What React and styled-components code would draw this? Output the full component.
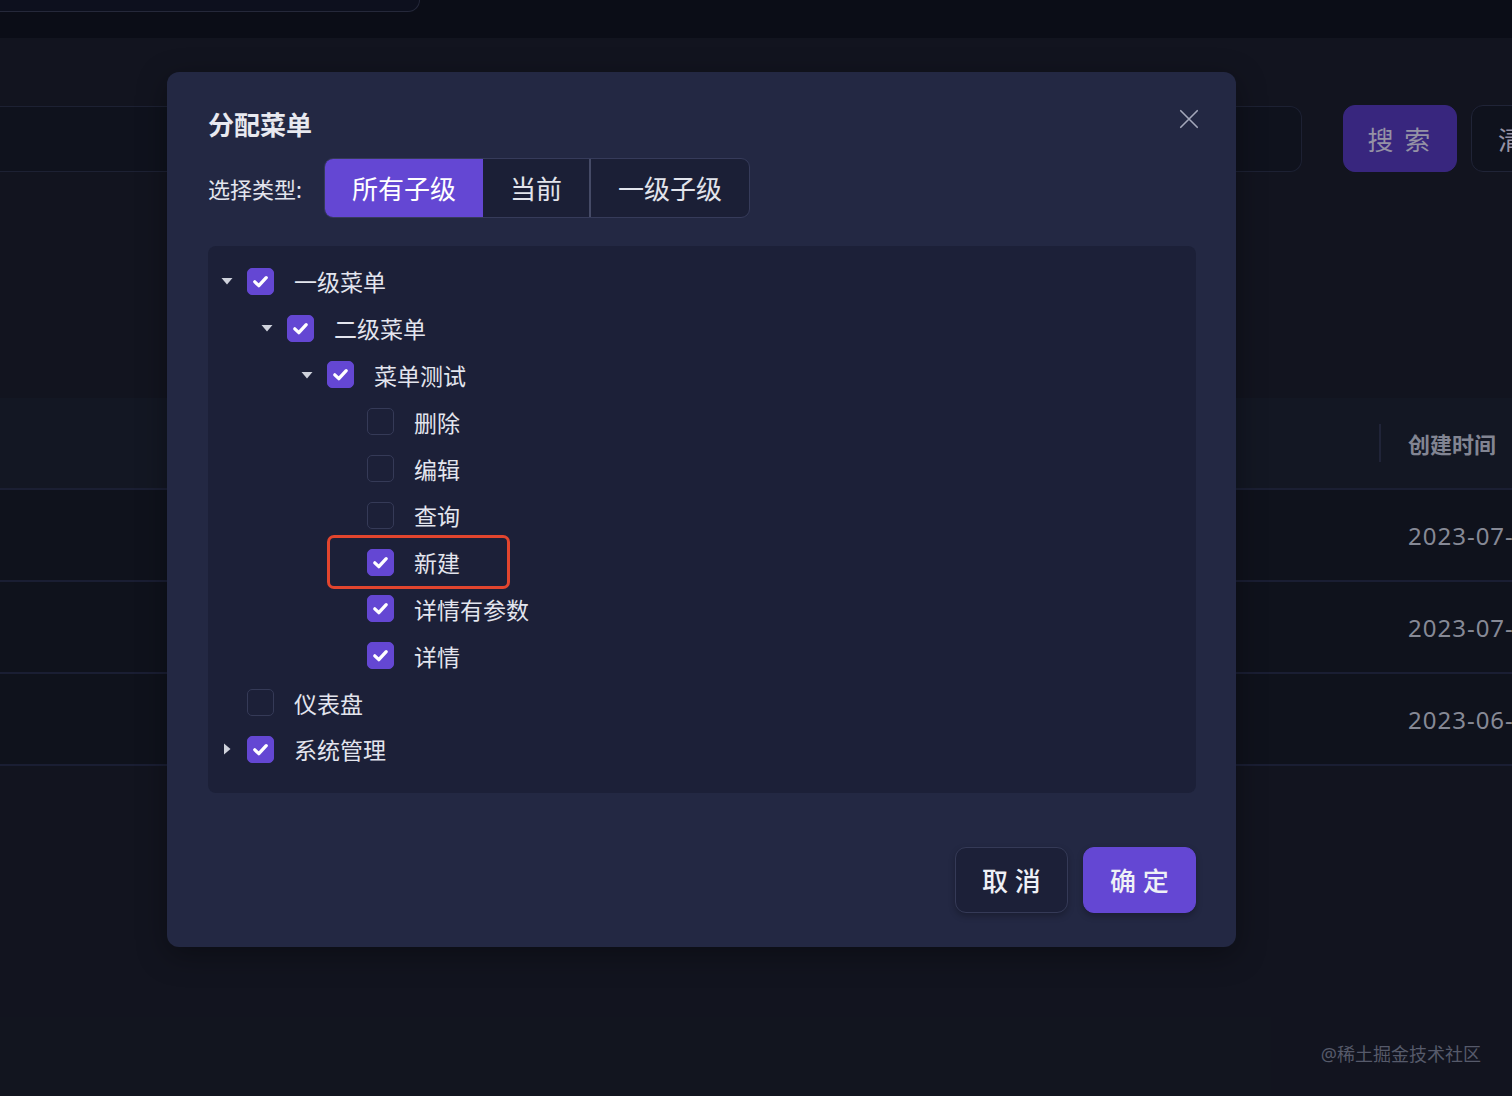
import React from 'react'
import styled, { createGlobalStyle } from 'styled-components'

const GlobalStyle = createGlobalStyle`
  html, body {
    margin: 0;
    padding: 0;
    background: #131621;
    overflow: hidden;
  }
  body {
    font-family: "Noto Sans", "Noto Sans CJK SC", sans-serif;
    color: #e6e8f0;
  }
  * { box-sizing: border-box; }
`

const Page = styled.div`
  width: 1512px;
  height: 1096px;
  display: flex;
  flex-direction: column;
  background: #131621;
  position: relative;
  overflow: hidden;
`

const TopBar = styled.div`
  height: 38px;
  flex-shrink: 0;
  display: flex;
  align-items: flex-end;
  padding-bottom: 26px;
  background: #0c0e19;
  overflow: hidden;
`

const TopInput = styled.div`
  width: 420px;
  height: 48px;
  flex-shrink: 0;
  border: 1px solid #272b3e;
  border-left: none;
  border-radius: 0 12px 12px 0;
  background: #0e1120;
`

const Content = styled.div`
  flex: 1;
  display: flex;
  flex-direction: column;
  padding-top: 67px;
`

const SearchRow = styled.div`
  display: flex;
  align-items: center;
  height: 67px;
`

const SearchInput = styled.div`
  width: 1302px;
  flex-shrink: 0;
  height: 66px;
  border: 1px solid #1f2336;
  border-left: none;
  border-radius: 0 12px 12px 0;
  background: #10131f;
`

const FormButton = styled.div`
  height: 67px;
  margin-left: ${p => p.$gap}px;
  width: ${p => p.$w}px;
  flex-shrink: 0;
  display: flex;
  align-items: center;
  justify-content: ${p => (p.$primary ? 'center' : 'flex-start')};
  padding-left: ${p => (p.$primary ? 0 : 26)}px;
  border-radius: 12px;
  font-size: 26px;
  letter-spacing: 2px;
  color: #9d9aae;
  background: ${p => (p.$primary ? '#3b2985' : '#10131f')};
  border: 1px solid ${p => (p.$primary ? '#3b2985' : '#22263a')};
  white-space: nowrap;
  overflow: hidden;
`

const Table = styled.div`
  margin-top: 226px;
  display: flex;
  flex-direction: column;
`

const HeadRow = styled.div`
  height: 92px;
  display: flex;
  align-items: center;
  background: #151925;
  border-bottom: 2px solid #1d2136;
`

const BodyRow = styled.div`
  height: 92px;
  display: flex;
  align-items: center;
  background: #10131e;
  border-bottom: 2px solid #1c2036;
`

const Cell = styled.div`
  margin-left: 1379px;
  height: 38px;
  display: flex;
  align-items: center;
  padding-left: 27px;
  border-left: 2px solid ${p => (p.$head ? '#22263c' : 'transparent')};
  font-size: ${p => (p.$head ? 22 : 24)}px;
  letter-spacing: ${p => (p.$head ? 0 : 1)}px;
  font-weight: ${p => (p.$head ? 700 : 400)};
  color: ${p => (p.$head ? '#8a8d9b' : '#8e919e')};
  white-space: nowrap;
`

const Watermark = styled.div`
  position: absolute;
  right: 31px;
  bottom: 30px;
  font-size: 18px;
  color: #5b5f70;
`

const Overlay = styled.div`
  position: absolute;
  inset: 0;
  background: rgba(0, 0, 0, 0.05);
  display: flex;
  align-items: flex-start;
  justify-content: flex-start;
  padding: 72px 0 0 167px;
`

const Modal = styled.div`
  width: 1069px;
  height: 875px;
  background: #232843;
  border-radius: 12px;
  padding: 36px 40px 34px 41px;
  display: flex;
  flex-direction: column;
  position: relative;
  box-shadow: 0 8px 30px rgba(0, 0, 0, 0.35);
`

const Title = styled.h3`
  margin: 0;
  height: 34px;
  line-height: 34px;
  font-size: 26px;
  font-weight: 700;
  color: #e8e9f0;
`

const CloseBtn = styled.button`
  position: absolute;
  top: 34px;
  right: 34px;
  width: 26px;
  height: 26px;
  padding: 0;
  border: none;
  background: none;
  display: flex;
  align-items: center;
  justify-content: center;
  svg { width: 22px; height: 22px; }
`

const TypeRow = styled.div`
  margin-top: 16px;
  display: flex;
  align-items: center;
  height: 60px;
`

const TypeLabel = styled.span`
  font-size: 22px;
  color: #e3e5ee;
  width: 116px;
  flex-shrink: 0;
`

const Segmented = styled.div`
  display: flex;
  height: 60px;
  border: 1px solid #363b5a;
  border-radius: 9px;
  overflow: hidden;
  background: #1b1f36;
`

const Segment = styled.div`
  display: flex;
  align-items: center;
  padding: 0 27px;
  font-size: 26px;
  color: ${p => (p.$active ? '#ffffff' : '#e2e4ec')};
  background: ${p => (p.$active ? '#6447d3' : 'transparent')};
  border-left: ${p => (p.$divider ? '2px solid #454a66' : 'none')};
  white-space: nowrap;
`

const TreePanel = styled.div`
  margin-top: 28px;
  background: #1c2038;
  border-radius: 8px;
  padding: 12px 0 20px 0;
`

const Row = styled.div`
  height: 46.8px;
  display: flex;
  align-items: center;
  padding-left: ${p => 4 + p.$level * 40}px;
`

const CaretSlot = styled.span`
  width: 30px;
  margin-right: 5px;
  display: flex;
  align-items: center;
  justify-content: center;
  svg { width: 12px; height: 12px; }
`

const Box = styled.span`
  width: 27px;
  height: 27px;
  flex-shrink: 0;
  border-radius: 5px;
  display: flex;
  align-items: center;
  justify-content: center;
  background: ${p => (p.$checked ? '#6447d3' : 'transparent')};
  border: 1.5px solid ${p => (p.$checked ? '#6447d3' : '#353a57')};
  svg { width: 19px; height: 19px; }
`

const Label = styled.span`
  margin-left: 20px;
  font-size: 23px;
  color: #e3e5ee;
  white-space: nowrap;
`

const Highlight = styled.div`
  display: flex;
  align-items: center;
  height: 54px;
  margin-left: -40px;
  padding-left: 37px;
  width: 183px;
  border: 3px solid #e2452e;
  border-radius: 7px;
`

const Footer = styled.div`
  margin-top: auto;
  display: flex;
  justify-content: flex-end;
  gap: 15px;
`

const FooterButton = styled.button`
  width: 113px;
  height: 66px;
  border-radius: 11px;
  font-family: inherit;
  font-size: 26px;
  font-weight: 500;
  color: #eef0f6;
  cursor: pointer;
  background: ${p => (p.$primary ? '#6447d3' : '#1c2038')};
  border: 1.5px solid ${p => (p.$primary ? '#6447d3' : '#353a57')};
  box-shadow: 0 3px 6px rgba(0, 0, 0, 0.25);
`

const Caret = ({ open }) => (
  <svg viewBox="0 0 12 12">
    {open ? (
      <path d="M0.5 3 L11.5 3 L6 9.5 Z" fill="#cfd2dc" />
    ) : (
      <path d="M3 0.5 L9.5 6 L3 11.5 Z" fill="#cfd2dc" />
    )}
  </svg>
)

const Check = () => (
  <svg viewBox="0 0 16 16" fill="none">
    <path d="M3.2 8.3 L6.6 11.5 L12.8 4.8" stroke="#fff" strokeWidth="2.8" strokeLinecap="round" strokeLinejoin="round" />
  </svg>
)

const tree = [
  { level: 0, label: '一级菜单', checked: true, caret: 'open' },
  { level: 1, label: '二级菜单', checked: true, caret: 'open' },
  { level: 2, label: '菜单测试', checked: true, caret: 'open' },
  { level: 3, label: '删除', checked: false },
  { level: 3, label: '编辑', checked: false },
  { level: 3, label: '查询', checked: false },
  { level: 3, label: '新建', checked: true, marked: true },
  { level: 3, label: '详情有参数', checked: true },
  { level: 3, label: '详情', checked: true },
  { level: 0, label: '仪表盘', checked: false },
  { level: 0, label: '系统管理', checked: true, caret: 'closed' },
]

const TreeRow = ({ item }) => {
  const inner = (
    <>
      <Box $checked={item.checked}>{item.checked && <Check />}</Box>
      <Label>{item.label}</Label>
    </>
  )
  return (
    <Row $level={item.level}>
      <CaretSlot>{item.caret && <Caret open={item.caret === 'open'} />}</CaretSlot>
      {item.marked ? <Highlight>{inner}</Highlight> : inner}
    </Row>
  )
}

export default function App() {
  return (
    <Page>
      <GlobalStyle />
      <TopBar>
        <TopInput />
      </TopBar>
      <Content>
        <SearchRow>
          <SearchInput />
          <FormButton $primary $gap={41} $w={114}>搜 索</FormButton>
          <FormButton $gap={14} $w={100}>清 空</FormButton>
        </SearchRow>
        <Table>
          <HeadRow><Cell $head>创建时间</Cell></HeadRow>
          <BodyRow><Cell>2023-07-12 10:20:31</Cell></BodyRow>
          <BodyRow><Cell>2023-07-03 16:45:12</Cell></BodyRow>
          <BodyRow><Cell>2023-06-28 09:12:40</Cell></BodyRow>
        </Table>
      </Content>
      <Watermark>@稀土掘金技术社区</Watermark>

      <Overlay>
        <Modal>
          <Title>分配菜单</Title>
          <CloseBtn aria-label="close">
            <svg viewBox="0 0 24 24" fill="none">
              <path d="M3 3 L21 21 M21 3 L3 21" stroke="#a3a7ba" strokeWidth="1.8" strokeLinecap="round" />
            </svg>
          </CloseBtn>
          <TypeRow>
            <TypeLabel>选择类型:</TypeLabel>
            <Segmented>
              <Segment $active>所有子级</Segment>
              <Segment>当前</Segment>
              <Segment $divider>一级子级</Segment>
            </Segmented>
          </TypeRow>
          <TreePanel>
            {tree.map((item, i) => (
              <TreeRow key={i} item={item} />
            ))}
          </TreePanel>
          <Footer>
            <FooterButton>取 消</FooterButton>
            <FooterButton $primary>确 定</FooterButton>
          </Footer>
        </Modal>
      </Overlay>
    </Page>
  )
}
